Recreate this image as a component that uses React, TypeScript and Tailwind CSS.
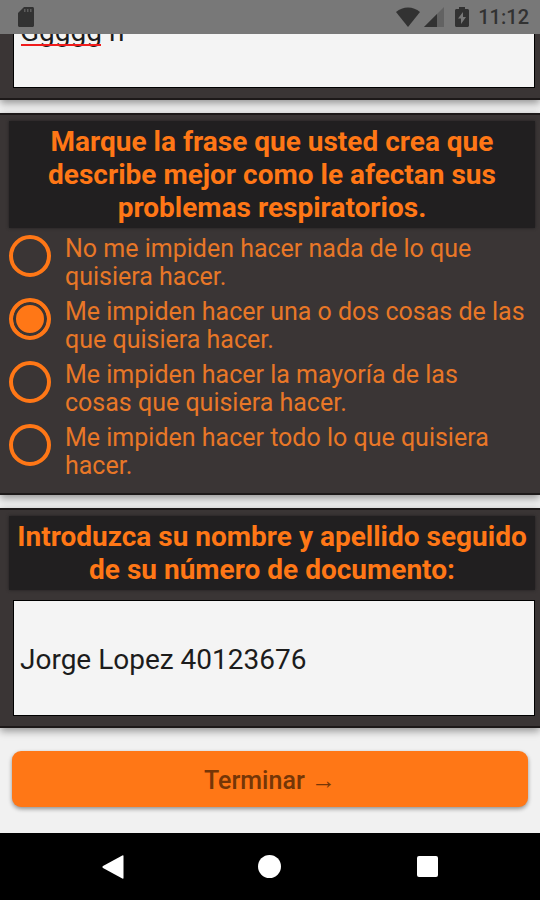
import { useState } from "react";
import type { ReactNode } from "react";

const options = [
  "No me impiden hacer nada de lo que quisiera hacer.",
  "Me impiden hacer una o dos cosas de las que quisiera hacer.",
  "Me impiden hacer la mayoría de las cosas que quisiera hacer.",
  "Me impiden hacer todo lo que quisiera hacer.",
];

function StatusBar() {
  return (
    <header className="flex h-[34px] shrink-0 items-center bg-[#787878] pl-[18px] pr-[11px] text-[#323232]">
      <svg className="h-5 w-4" viewBox="4 2 16 20" preserveAspectRatio="none" fill="currentColor" aria-hidden="true">
        <path d="M18.500 2H10L4 8v12.500c0 .8.700 1.500 1.500 1.500h13c.8 0 1.500-.7 1.500-1.500v-17c0-.8-.7-1.500-1.500-1.500z" />
        <path d="M10 4h1.500v3H10zm3 0h1.500v3H13zm3 0h1.500v3H16z" fill="#5c5c5c" />
      </svg>
      <div className="ml-auto flex items-center">
        <svg className="h-5 w-6" viewBox="0 0 24 20" fill="currentColor" aria-hidden="true">
          <path d="M12 20 0 5C3.500 2 7.500.500 12 .500S20.500 2 24 5z" />
        </svg>
        <svg className="ml-1 h-5 w-5" viewBox="0 0 20 20" aria-hidden="true">
          <path d="M0 20 20 0v20z" fill="#626262" />
          <path d="M0 20 13 7v13z" fill="currentColor" />
        </svg>
        <svg className="ml-[11px] h-5 w-[14px]" viewBox="0 0 14 20" fill="currentColor" aria-hidden="true">
          <path d="M4 0h6v2h2.500c.8 0 1.500.7 1.500 1.500v15c0 .8-.7 1.500-1.500 1.500h-11C.7 20 0 19.300 0 18.500v-15C0 2.700.7 2 1.500 2H4z" />
          <path d="M8 5 3 11.500h3V17l5-7H8z" fill="#787878" />
        </svg>
        <time className="ml-[9px] text-xl leading-5 font-medium">11:12</time>
      </div>
    </header>
  );
}

function Card({ children }: { children: ReactNode }) {
  return (
    <section className="shrink-0 border-y-2 border-y-[#1d1919] bg-[#3a3535] pt-1.5 pr-[5px] pb-2.5 pl-[9px] shadow-[0_3px_8px_rgba(0,0,0,0.4)]">
      {children}
    </section>
  );
}

const titleClass =
  "bg-[#211f20] py-1 text-center text-[28px] leading-[33px] font-bold text-[#ff7716] shadow-[0_0_3px_#211f20]";
const inputClass =
  "block h-[116px] w-full border border-black bg-[#f4f4f4] px-1.5 pt-0.5 text-[28px] text-[#1c1c1c] outline-none";

export default function App() {
  const [selected, setSelected] = useState(1);
  const [name, setName] = useState("Jorge Lopez 40123676");

  return (
    <div className="flex h-screen flex-col bg-[#f1f1f1] font-[Roboto,sans-serif]">
      <StatusBar />

      {/* Form, scrolled to the end */}
      <main className="flex min-h-0 flex-1 flex-col justify-end gap-[13px] overflow-hidden">
        <Card>
          <div className="relative ml-1">
            <input type="text" aria-label="Respuesta" defaultValue="Ggggg h" className={inputClass} />
            {/* Spell-check mark */}
            <span className="absolute bottom-[42px] left-2 h-0.5 w-20 bg-[#f01c1c]" />
          </div>
        </Card>

        <Card>
          <h2 id="impact" className={titleClass}>
            Marque la frase que usted crea que describe mejor como le afectan sus problemas respiratorios.
          </h2>
          <div role="radiogroup" aria-labelledby="impact" className="flex flex-col gap-[7px] pt-[7px] pr-2 pb-[3px]">
            {options.map((option, i) => (
              <label key={option} className="flex items-start gap-3.5 text-[25px] leading-7 text-[#e87727]">
                <input
                  type="radio"
                  name="impact"
                  checked={selected === i}
                  onChange={() => setSelected(i)}
                  className="size-[42px] shrink-0 appearance-none rounded-full border-4 border-[#ff7716] checked:bg-[#ff7716] checked:shadow-[inset_0_0_0_3px_#3a3535]"
                />
                {option}
              </label>
            ))}
          </div>
        </Card>

        <Card>
          <h2 className={titleClass}>
            <label htmlFor="name">Introduzca su nombre y apellido seguido de su número de documento:</label>
          </h2>
          <div className="pt-2.5 pl-1">
            <input
              id="name"
              type="text"
              value={name}
              onChange={(e) => setName(e.target.value)}
              className={inputClass}
            />
          </div>
        </Card>

        <div className="shrink-0 px-3 pt-2.5 pb-[26px]">
          <button
            type="button"
            className="h-14 w-full rounded-[9px] bg-[#ff7716] pt-1 text-[25px] font-medium text-[#753607] shadow-[0_2px_4px_rgba(0,0,0,0.4)]"
          >
            Terminar →
          </button>
        </div>
      </main>

      <nav className="grid h-[67px] shrink-0 grid-cols-3 bg-black px-[34px] text-white">
        <button type="button" aria-label="Atrás" className="flex items-center justify-center">
          <svg className="size-6" viewBox="0 0 24 24" fill="currentColor">
            <path d="M22.500 1v22q0 1-1.200.5L2 13q-1.500-1 0-2L21.300.5q1.200-.5 1.200.5z" />
          </svg>
        </button>
        <button type="button" aria-label="Inicio" className="flex items-center justify-center">
          <span className="size-[23px] rounded-full bg-white" />
        </button>
        <button type="button" aria-label="Recientes" className="flex items-center justify-center">
          <span className="size-[21px] rounded-xs bg-white" />
        </button>
      </nav>
    </div>
  );
}
